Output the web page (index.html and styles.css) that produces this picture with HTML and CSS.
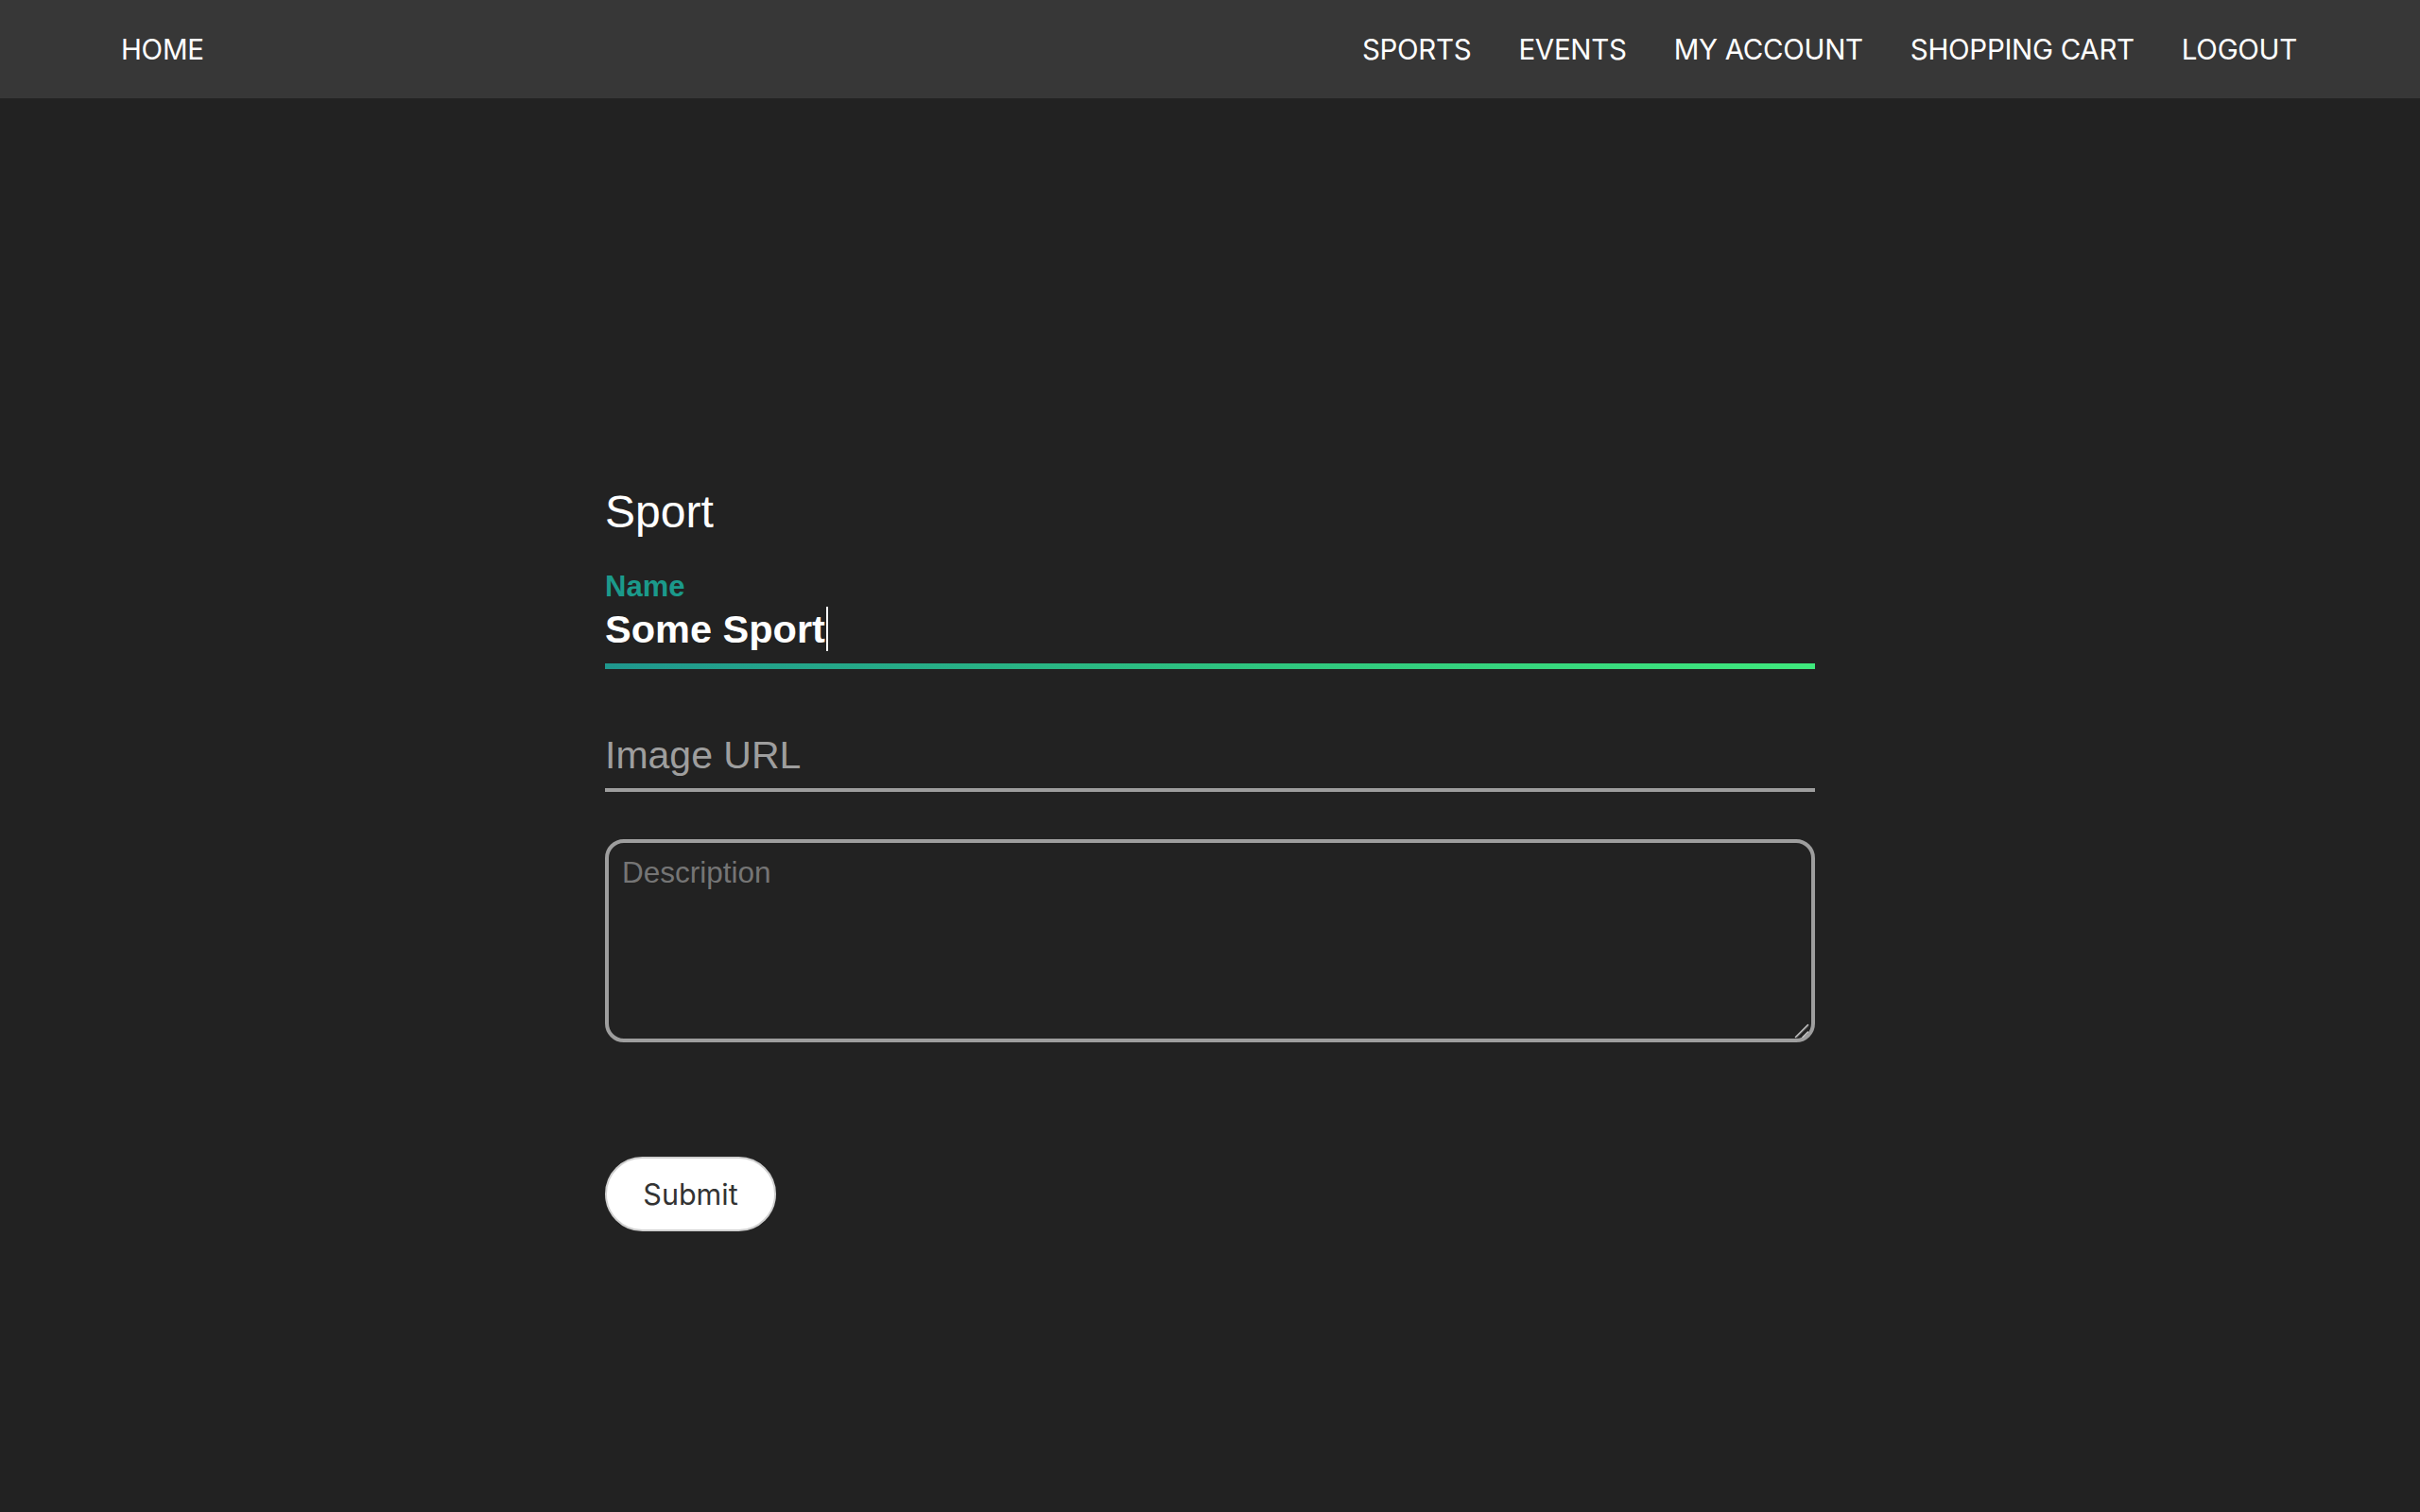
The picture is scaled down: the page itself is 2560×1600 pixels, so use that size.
FILE: index.html
```html
<!DOCTYPE html>
<html lang="en">
<head>
<meta charset="utf-8">
<title>Sport</title>
<link rel="stylesheet" href="styles.css">
</head>
<body>
<nav class="navbar">
  <a class="nav-link" href="#">HOME</a>
  <div class="nav-right">
    <a class="nav-link" href="#">SPORTS</a>
    <a class="nav-link" href="#">EVENTS</a>
    <a class="nav-link" href="#">MY ACCOUNT</a>
    <a class="nav-link" href="#">SHOPPING CART</a>
    <a class="nav-link" href="#">LOGOUT</a>
  </div>
</nav>
<main class="content">
  <form class="sport-form">
    <h2 class="form-title">Sport</h2>
    <label class="field-label" for="name">Name</label>
    <div class="name-wrap"><span class="name-value">Some Sport</span><span class="caret"></span></div>
    <input class="url-input" type="text" placeholder="Image URL">
    <div class="desc-wrap">
      <textarea class="desc-input" placeholder="Description"></textarea>
      <svg class="grip" width="16" height="16" viewBox="0 0 16 16" aria-hidden="true">
        <line x1="1.5" y1="14.5" x2="14.5" y2="1.5" stroke="#c4c4c4" stroke-width="1.6" stroke-linecap="round"/>
        <line x1="2.5" y1="15.5" x2="15.5" y2="2.5" stroke="#555" stroke-width="0.8"/>
        <line x1="9" y1="14.5" x2="14.5" y2="9" stroke="#c4c4c4" stroke-width="1.6" stroke-linecap="round"/>
      </svg>
    </div>
    <div class="actions"><button class="submit-btn" type="button">Submit</button></div>
  </form>
</main>
</body>
</html>
```
FILE: styles.css
```css
html, body {
  margin: 0;
  padding: 0;
  background: #222222;
  min-height: 100%;
}
body {
  font-family: "Liberation Sans", Arial, sans-serif;
  color: #ffffff;
  min-height: 1600px;
}
.navbar {
  height: 104px;
  background: #373737;
  display: flex;
  align-items: center;
  justify-content: space-between;
  padding: 0 130px 0 128px;
  box-sizing: border-box;
}
.nav-right {
  display: flex;
  gap: 50px;
}
.nav-link {
  font-family: Inter, "Liberation Sans", sans-serif;
  font-size: 29.5px;
  line-height: 36px;
  color: #ffffff;
  text-decoration: none;
  letter-spacing: -0.3px;
}
.sport-form {
  width: 1280px;
  margin: 410px auto 0;
  display: flex;
  flex-direction: column;
}
.form-title {
  font-size: 48px;
  line-height: 55px;
  font-weight: normal;
  margin: 0 0 35px;
  color: #ffffff;
}
.field-label {
  font-size: 31px;
  line-height: 34px;
  font-weight: bold;
  color: #1b9a8b;
}
.name-wrap {
  display: flex;
  align-items: stretch;
  padding: 4px 0 13px;
  border-bottom: 6px solid transparent;
  border-image: linear-gradient(to right, #1f978e, #2fc67f 55%, #3fe97d) 1;
  font-size: 41.5px;
  line-height: 47px;
  font-weight: bold;
  color: #ffffff;
}
.caret {
  width: 2px;
  background: #ffffff;
  margin-left: 1px;
}
.url-input {
  margin-top: 67px;
  padding: 1px 0 11px;
  border: none;
  border-bottom: 4px solid #9e9e9e;
  background: transparent;
  font-family: "Liberation Sans", Arial, sans-serif;
  font-size: 41px;
  line-height: 47px;
  height: 63px;
  box-sizing: border-box;
  color: #ffffff;
  outline: none;
}
.url-input::placeholder {
  color: #9e9e9e;
}
.desc-wrap {
  position: relative;
  margin-top: 50px;
  display: flex;
}
.desc-input {
  flex: 1;
  height: 215px;
  box-sizing: border-box;
  border: 4px solid #9e9e9e;
  border-radius: 20px;
  background: transparent;
  padding: 13px 14px;
  font-family: "Liberation Sans", Arial, sans-serif;
  font-size: 31.5px;
  line-height: 36px;
  color: #ffffff;
  outline: none;
  resize: none;
}
.desc-input::placeholder {
  color: #757575;
}
.grip {
  position: absolute;
  right: 6px;
  bottom: 4px;
  pointer-events: none;
}
.actions {
  margin-top: 121px;
}
.submit-btn {
  height: 79px;
  width: 181px;
  border-radius: 40px;
  border: 2px solid #d0d0d0;
  background: #ffffff;
  color: #333333;
  font-family: Inter, "Liberation Sans", sans-serif;
  font-size: 30.5px;
  padding: 0;
}
```
